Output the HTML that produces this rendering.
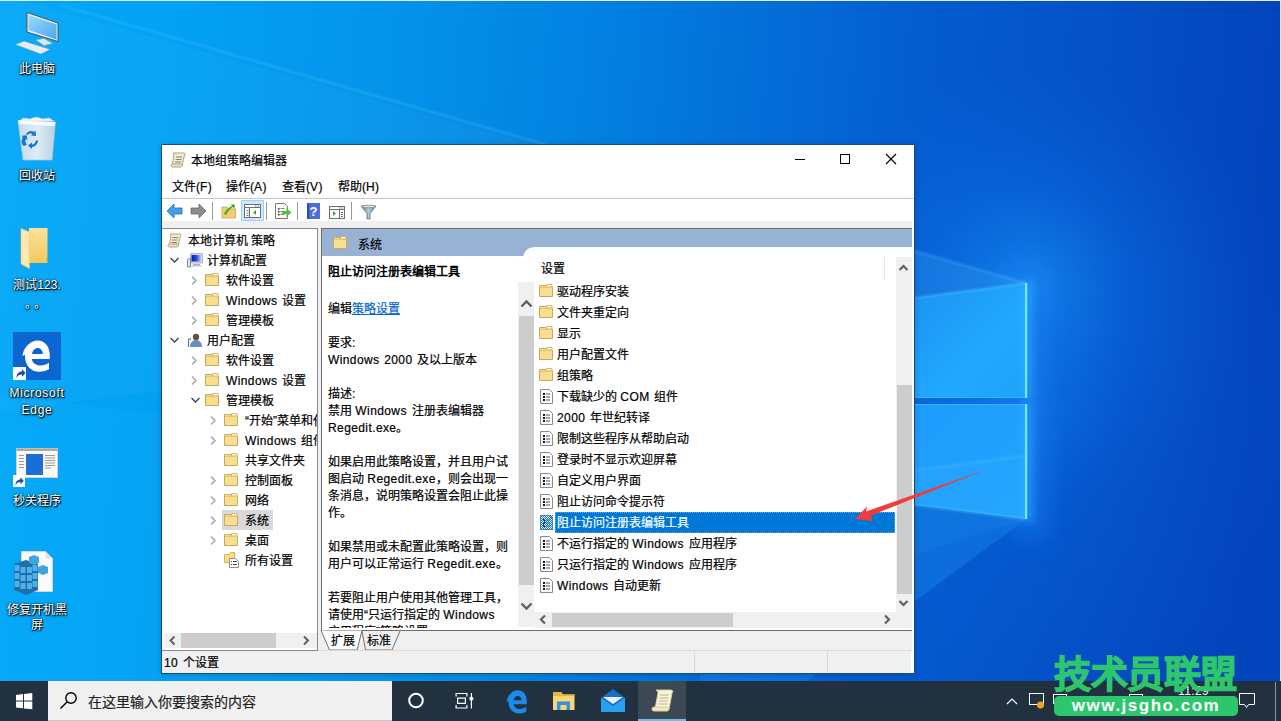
<!DOCTYPE html><html lang="zh-CN"><head><meta charset="utf-8"><style>
*{margin:0;padding:0;box-sizing:border-box}
html,body{width:1281px;height:721px;overflow:hidden}
body{position:relative;font-family:"Liberation Sans",sans-serif;font-size:12px;color:#000;background:#0a6fd8}
.a{position:absolute}
.t{position:absolute;white-space:nowrap;line-height:20px;height:20px;-webkit-text-stroke:0.2px currentColor}
b{-webkit-text-stroke:0}
.L{letter-spacing:0.4px;word-spacing:1px}
svg{position:absolute;overflow:visible}
.dt{position:absolute;color:#fff;text-align:center;width:80px;left:-3px;line-height:17px;margin-top:1px;text-shadow:0 0 2px rgba(0,0,0,.9),1px 1px 1px #000,0 1px 3px rgba(0,0,0,.6)}
</style></head><body>

<svg class="a" style="left:0;top:0" width="1281" height="721">
<defs>
<linearGradient id="bgx" x1="0" y1="0" x2="1281" y2="120" gradientUnits="userSpaceOnUse">
<stop offset="0" stop-color="#03a7f7"/><stop offset="0.13" stop-color="#02a2f5"/><stop offset="0.3" stop-color="#0394ea"/><stop offset="0.47" stop-color="#0280e0"/><stop offset="0.72" stop-color="#045ccf"/><stop offset="1" stop-color="#0444bc"/>
</linearGradient>
<radialGradient id="glow" cx="1000" cy="400" r="330" gradientUnits="userSpaceOnUse">
<stop offset="0" stop-color="#1a8cff" stop-opacity="0.5"/><stop offset="0.4" stop-color="#0a6ee8" stop-opacity="0.2"/><stop offset="1" stop-color="#0a60e0" stop-opacity="0"/>
</radialGradient>
<radialGradient id="glow2" cx="1030" cy="285" r="230" gradientUnits="userSpaceOnUse"><stop offset="0" stop-color="#20a0ff" stop-opacity="0.55"/><stop offset="0.45" stop-color="#1080f0" stop-opacity="0.22"/><stop offset="1" stop-color="#0a60e0" stop-opacity="0"/></radialGradient>
<linearGradient id="up" x1="914" y1="290" x2="1026" y2="398" gradientUnits="userSpaceOnUse">
<stop offset="0" stop-color="#1a94f2"/><stop offset="0.6" stop-color="#22a8ff"/><stop offset="1" stop-color="#1ea2fa"/>
</linearGradient>
<linearGradient id="lo" x1="914" y1="404" x2="1026" y2="519" gradientUnits="userSpaceOnUse">
<stop offset="0" stop-color="#1e9cfc"/><stop offset="1" stop-color="#22a4ff"/>
</linearGradient>
<filter id="bl" filterUnits="userSpaceOnUse" x="0" y="0" width="1281" height="721"><feGaussianBlur stdDeviation="0.8"/></filter>
<filter id="bl4" filterUnits="userSpaceOnUse" x="0" y="0" width="1281" height="721"><feGaussianBlur stdDeviation="4"/></filter>
<filter id="bl12" filterUnits="userSpaceOnUse" x="0" y="0" width="1281" height="721"><feGaussianBlur stdDeviation="14"/></filter>
</defs>
<rect width="1281" height="721" fill="url(#bgx)"/>
<rect width="1281" height="721" fill="url(#glow)"/>
<rect width="1281" height="721" fill="url(#glow2)"/>
<polygon points="1010,260 1040,270 1045,540 1010,530" fill="#1a80f8" opacity="0.6" filter="url(#bl12)"/>
<polygon points="1026,283 -40,-17 -40,416" fill="#ffffff" opacity="0.035"/>
<polygon points="1026,283 700,190 700,326" fill="#30b0ff" opacity="0.18"/>
<line x1="60" y1="5" x2="1026" y2="283" stroke="#5ac8ff" stroke-width="2" opacity="0.35" filter="url(#bl)"/>
<polygon points="700,326 1026,283 1026,398 700,398" fill="url(#up)"/>
<polygon points="700,404 1026,404 1026,519 700,478" fill="url(#lo)"/>
<polygon points="700,500 1026,452 1026,519 700,478" fill="#2aaaff" opacity="0.35"/>
<polygon points="1026,519 -40,390 -40,860" fill="#30c0ff" opacity="0.10"/>
<polygon points="1026,519 700,478 700,760" fill="#1a90f0" opacity="0.35"/>
<rect x="1024" y="281" width="8" height="118" fill="#30b8ff" opacity="0.6" filter="url(#bl4)"/>
<rect x="1024" y="403" width="8" height="118" fill="#30b8ff" opacity="0.6" filter="url(#bl4)"/>
<rect x="1025" y="283" width="2.2" height="115" fill="#78e6ff"/>
<rect x="1025" y="404" width="2.2" height="115" fill="#78e6ff"/>
<line x1="700" y1="326" x2="1026" y2="283" stroke="#60c8ff" stroke-width="1.5" opacity="0.6" filter="url(#bl)"/>
<line x1="700" y1="478" x2="1026" y2="519" stroke="#60c8ff" stroke-width="1.5" opacity="0.6" filter="url(#bl)"/>
<line x1="700" y1="404.5" x2="1026" y2="404.5" stroke="#5ccaff" stroke-width="1.2" opacity="0.55"/>
<line x1="700" y1="397.5" x2="1026" y2="397.5" stroke="#5ccaff" stroke-width="1" opacity="0.35"/>
<line x1="700" y1="500" x2="1026" y2="456" stroke="#5ccaff" stroke-width="1.2" opacity="0.45" filter="url(#bl)"/>
</svg>
<div class="a" style="left:1280px;top:0;width:1px;height:721px;background:#dfe9f3"></div>
<div class="a" style="left:0;top:0;width:1281px;height:1px;background:#e6eef5"></div>
<svg style="left:0;top:0" width="80" height="60">
<defs><linearGradient id="scr" x1="0" y1="0" x2="1" y2="1"><stop offset="0" stop-color="#9ad8fb"/><stop offset="1" stop-color="#4aa8ec"/></linearGradient></defs>
<polygon points="27,12.5 58,23 58,41.5 27,32" fill="#e9eef2" stroke="#3a4a58" stroke-width="0.9"/>
<polygon points="28.5,15 56.5,24.5 56.5,39.5 28.5,30" fill="url(#scr)"/>
<polygon points="36,40 44,38.5 52.5,43.5 44,45.5" fill="#dfe6ec" stroke="#9aa8b4" stroke-width="0.6"/>
<polygon points="16,44.5 24,41.5 49.5,49.5 41,53.8" fill="#f2f5f8" stroke="#b8c4ce" stroke-width="0.6"/>
<g stroke="#c8d2da" stroke-width="0.5"><line x1="19" y1="44" x2="44" y2="52"/><line x1="21.5" y1="43" x2="46.5" y2="51"/></g>
</svg>
<div class="dt" style="top:60px">此电脑</div>
<svg style="left:0;top:105px" width="80" height="60">
<defs><linearGradient id="rb" x1="0" y1="0" x2="1" y2="0"><stop offset="0" stop-color="#d4e0ea"/><stop offset="0.5" stop-color="#eef3f7"/><stop offset="1" stop-color="#c8d6e2"/></linearGradient></defs>
<path d="M20 16l3-3 7 1 6-2 7 2 6-1 5 3z" fill="#f6f8fa" stroke="#c8d2dc" stroke-width="0.6"/>
<polygon points="18,16 55.5,17 52,55 23,55" fill="url(#rb)" stroke="#b9c6d2" stroke-width="0.7" opacity="0.92"/>
<polygon points="18,15 55.5,17 54.5,21 19,19" fill="#ffffff" opacity="0.8"/>
<g fill="#1b74d0">
<path d="M26 29c2-3 6-4 8-2l1.5-1.5 0.5 5.5-5-0.5 1.5-1.5c-1.5-1-4-0.5-5 1z"/>
<path d="M38 35c0 4-3 7-6 7l0 2-4-3.5 4-3 0 2c2 0 3.5-1.5 3.5-3.5z"/>
<path d="M24 41c-3-2-3-6-1-9l-1.5-1 5-1 1 5-1.5-1c-1 2-1 4 1 5.5z"/>
</g>
</svg>
<div class="dt" style="top:167px">回收站</div>
<svg style="left:0;top:215px" width="80" height="60">
<defs><linearGradient id="fd" x1="0" y1="0" x2="0" y2="1"><stop offset="0" stop-color="#fbe29a"/><stop offset="1" stop-color="#f3c95c"/></linearGradient></defs>
<path d="M26 13h21.5v30l-1.5 2v2.5h1.5V48H29V13z" fill="url(#fd)"/>
<polygon points="47.5,43 47.5,48 46,48 46,45" fill="#e8b850"/>
<polygon points="21,13.5 29.5,17 29.5,53.5 21,49" fill="#fde9ad" stroke="#e6c470" stroke-width="0.6"/>
</svg>
<div class="dt" style="top:276px">测试123.</div>
<div class="dt" style="top:295px;letter-spacing:3px">。。</div>
<div class="a" style="left:13px;top:332px;width:48px;height:48px;background:#0c66d2"></div>
<svg style="left:13px;top:332px" width="48" height="48">
<path d="M24.5 8.5c-7 0-12.5 6.5-12.5 15.5 0 9.5 6 15.8 14 15.8 4 0 7.5-1 10-2.5v-6.5c-2.5 1.8-5.5 2.8-8.5 2.8-4.5 0-8-2.2-8.7-6.5H36.8v-3.5C36.8 14.5 32 8.5 24.5 8.5zM19 22c0.6-3.5 2.8-6 5.7-6s5 2.4 5.2 6z" fill="#fff" fill-rule="evenodd"/>
<path d="M9.5 24c1-8 6-13.5 12-14.5-4 1.5-6.5 4.5-7.5 8 1.5-2 4-3 6-3-3 1.5-4.5 4-5 7z" fill="#fff"/>
<rect x="0" y="35" width="13" height="13" fill="#fff"/>
<path d="M3.5 46c0-4.5 2.5-6.5 5.5-6.5v-2.5l3.5 4-3.5 4v-2.5c-2.5 0-4.5 1-5.5 3.5z" fill="#1b4fa0"/>
</svg>
<div class="dt" style="top:384px;letter-spacing:0.7px">Microsoft</div>
<div class="dt" style="top:401px;letter-spacing:0.7px">Edge</div>
<svg style="left:0;top:440px" width="80" height="60">
<rect x="16.5" y="8.5" width="41" height="29" fill="#fbfaf8" stroke="#d8d0c8"/>
<rect x="16.5" y="8.5" width="41" height="2.5" fill="#b0a8a0"/>
<rect x="26" y="14" width="17" height="21" fill="#1a6ed6"/>
<g fill="#9a9a9a"><rect x="19" y="15" width="5" height="1"/><rect x="19" y="18" width="5" height="1"/><rect x="19" y="21" width="5" height="1"/><rect x="19" y="24" width="5" height="1"/><rect x="19" y="27" width="5" height="1"/>
<rect x="45" y="15" width="10" height="1"/><rect x="45" y="17.5" width="10" height="1"/><rect x="45" y="20" width="10" height="1"/><rect x="45" y="22.5" width="10" height="1"/><rect x="45" y="25" width="10" height="1"/><rect x="45" y="27.5" width="6" height="1"/></g>
<rect x="13" y="35" width="12" height="12" fill="#fff"/>
<path d="M15.5 45.5c0-4 2.2-6 5-6v-2.3l3.2 3.6-3.2 3.6v-2.3c-2.2 0-4 1-5 3.4z" fill="#1b4fa0"/>
</svg>
<div class="dt" style="top:492px">秒关程序</div>
<svg style="left:0;top:540px" width="80" height="60">
<polygon points="21.5,11.5 45.5,11.5 52.5,18.5 52.5,51.5 21.5,51.5" fill="#fafafa" stroke="#d4d4d4"/>
<polygon points="45.5,11.5 45.5,18.5 52.5,18.5" fill="#e0e0e0"/>
<g>
<polygon points="14,24 26,20 38,24 38,50 26,55 14,50" fill="#1f6fae"/>
<g fill="#4fb0e8">
<rect x="14.5" y="25" width="5" height="6"/><rect x="20.5" y="27" width="5" height="6"/><rect x="27" y="27" width="5" height="6"/><rect x="32.5" y="25" width="5" height="6"/>
<rect x="14.5" y="33" width="5" height="6"/><rect x="20.5" y="35" width="5" height="6"/><rect x="27" y="35" width="5" height="6"/><rect x="32.5" y="33" width="5" height="6"/>
<rect x="14.5" y="41" width="5" height="6"/><rect x="20.5" y="43" width="5" height="6"/><rect x="27" y="43" width="5" height="6"/><rect x="32.5" y="41" width="5" height="6"/>
</g></g>
<polygon points="29,17 34,15 39,17 39,23 34,25 29,23" fill="#3fa4e4"/>
<polygon points="38,27 43,25 48,27 48,33 43,35 38,33" fill="#3fa4e4"/>
</svg>
<div class="dt" style="top:601px">修复开机黑</div>
<div class="dt" style="top:616px">屏</div>
<div class="a" style="left:161px;top:144px;width:754px;height:530px;background:#fff;border:1px solid #1d4a70;box-shadow:0 1px 6px rgba(0,0,0,.18)"></div>
<svg style="left:170px;top:152px" width="16" height="16">
<path d="M3 1h11c1 0 1.5 1 .5 2L12 14H2l2-11C4 2 3 1 3 1z" fill="#f3ecd2" stroke="#b0a27c" stroke-width="1"/>
<rect x="1" y="12" width="11" height="3" rx="1.5" fill="#ede3c0" stroke="#b0a27c"/>
<g stroke="#8a8068"><line x1="6" y1="5" x2="12" y2="5"/><line x1="5.5" y1="7.5" x2="11.5" y2="7.5"/><line x1="5" y1="10" x2="11" y2="10"/></g>
</svg>
<div class="t" style="left:191px;top:151px">本地组策略编辑器</div>
<svg style="left:0;top:0" width="1" height="1">
<line x1="795" y1="159.5" x2="805" y2="159.5" stroke="#000"/>
<rect x="840.5" y="154.5" width="9" height="9" fill="none" stroke="#000"/>
<path d="M886 154l10 10M896 154l-10 10" stroke="#000" stroke-width="1.1"/>
</svg>
<div class="t" style="left:172px;top:177px">文件(<span class="L">F)</span></div>
<div class="t" style="left:226px;top:177px">操作(<span class="L">A)</span></div>
<div class="t" style="left:282px;top:177px">查看(<span class="L">V)</span></div>
<div class="t" style="left:338px;top:177px">帮助(<span class="L">H)</span></div>
<div class="a" style="left:162px;top:198px;width:752px;height:1px;background:#c6c6c6"></div>
<div class="a" style="left:162px;top:221px;width:752px;height:7px;background:#f0f0f0"></div>
<div class="a" style="left:241px;top:200px;width:23px;height:21px;background:#cce8ff;border:1px solid #99d1ff"></div>
<svg style="left:0;top:0" width="1" height="1">
<g stroke="#9a9a9a"><line x1="212.5" y1="202" x2="212.5" y2="220"/><line x1="266.5" y1="202" x2="266.5" y2="220"/><line x1="297.5" y1="202" x2="297.5" y2="220"/><line x1="351.5" y1="202" x2="351.5" y2="220"/></g>
<path d="M167 211l7-7v4h8v6h-8v4z" fill="#3fa0e6" stroke="#2270b0" stroke-width="0.8"/>
<path d="M206 211l-7-7v4h-8v6h8v4z" fill="#8c8c8c" stroke="#6a6a6a" stroke-width="0.8"/>
<path d="M222 207h5l1.5 2h7v9h-13.5z" fill="#f2cf6e" stroke="#c7a246" stroke-width="0.8"/>
<path d="M224 214c2-4 4-6 8-8l-1-2 4 1-1 4-1-2c-3 2-5 4-7 8z" fill="#3aa82a"/>
<rect x="244.5" y="204.5" width="16" height="13" fill="#fff" stroke="#707070"/>
<line x1="244.5" y1="207.5" x2="260.5" y2="207.5" stroke="#707070"/>
<line x1="249.5" y1="208" x2="249.5" y2="217" stroke="#707070"/>
<path d="M256 210l-3 2.5 3 2.5z" fill="#3aa82a"/>
<g fill="#707070"><rect x="246.5" y="210" width="2" height="1"/><rect x="246.5" y="212.5" width="2" height="1"/><rect x="246.5" y="215" width="2" height="1"/><rect x="255" y="205.5" width="1.5" height="1"/><rect x="257.5" y="205.5" width="1.5" height="1"/></g>
<path d="M275.5 203.5h9l3 3v12h-12z" fill="#fdfaf0" stroke="#7a7a7a"/>
<g fill="#333"><rect x="278" y="208" width="1.5" height="1.5"/><rect x="278" y="211" width="1.5" height="1.5"/><rect x="278" y="214" width="1.5" height="1.5"/></g>
<g fill="#888"><rect x="280.5" y="208" width="4" height="1"/><rect x="280.5" y="211" width="4" height="1"/><rect x="280.5" y="214" width="4" height="1"/></g>
<path d="M282 211h4.5v-2.5l5 4-5 4v-2.5H282z" fill="#4cc33a"/>
<rect x="307" y="203" width="13" height="16" fill="#2f4dae"/>
<rect x="309" y="203" width="11" height="16" fill="#4f6fd6"/>
<text x="313.5" y="216" font-size="13" font-weight="bold" fill="#fff" text-anchor="middle" font-family="Liberation Sans">?</text>
<rect x="329.5" y="206.5" width="15" height="12" fill="#fff" stroke="#707070"/>
<line x1="329.5" y1="209.5" x2="344.5" y2="209.5" stroke="#707070"/>
<line x1="339.5" y1="210" x2="339.5" y2="218" stroke="#707070"/>
<path d="M333 211v5l3-2.5z" fill="#3aa82a"/>
<g fill="#707070"><rect x="341" y="212" width="2" height="1"/><rect x="341" y="214" width="2" height="1"/><rect x="341" y="216" width="2" height="1"/><rect x="339" y="207.5" width="1.5" height="1"/><rect x="341.5" y="207.5" width="1.5" height="1"/></g>
<defs><linearGradient id="fun" x1="0" y1="0" x2="1" y2="0"><stop offset="0" stop-color="#5f7888"/><stop offset="0.5" stop-color="#b8cad6"/><stop offset="1" stop-color="#6a8494"/></linearGradient></defs><path d="M361 206h15l-6 7.5v5.5h-3v-5.5z" fill="url(#fun)" stroke="#56707f" stroke-width="0.8"/><ellipse cx="368.5" cy="206.5" rx="7" ry="1.3" fill="#d8e4ec" stroke="#56707f" stroke-width="0.6"/>
</svg>
<div class="a" style="left:162px;top:228px;width:156px;height:423px;background:#fff;border-top:1px solid #828790;border-right:1px solid #828790"></div>
<div class="a" style="left:318px;top:228px;width:3px;height:423px;background:#f0f0f0"></div>
<div class="a" style="left:163px;top:230px;width:154px;height:403px;overflow:hidden">
<svg style="left:4px;top:3px" width="15" height="15">
<path d="M3 1h10c1 0 1.5 1 .5 2L11 13H2l2-10C4 2 3 1 3 1z" fill="#f3ecd2" stroke="#b0a27c"/>
<rect x="1" y="11" width="10" height="3" rx="1.5" fill="#ede3c0" stroke="#b0a27c"/>
<g stroke="#8a8068"><line x1="5.5" y1="4.5" x2="11" y2="4.5"/><line x1="5" y1="7" x2="10.5" y2="7"/><line x1="4.5" y1="9.5" x2="10" y2="9.5"/></g></svg>
<div class="t" style="left:25px;top:1px">本地计算机 策略</div>
<svg style="left:7px;top:27px" width="9" height="6"><path d="M0.5 1l4 4 4-4" fill="none" stroke="#404040" stroke-width="1.3"/></svg>
<svg style="left:23px;top:22px" width="17" height="16">
<defs><linearGradient id="cg" x1="0" y1="0" x2="1" y2="0"><stop offset="0" stop-color="#0a1ab0"/><stop offset="0.5" stop-color="#2a4ae0"/><stop offset="1" stop-color="#c8d8ff"/></linearGradient></defs>
<rect x="4.5" y="1.5" width="12" height="9.5" fill="#d8dce0" stroke="#b0b8c0"/>
<rect x="5.5" y="3" width="10" height="6.5" fill="url(#cg)"/>
<rect x="7" y="12" width="7" height="1.2" fill="#a8b0b8"/>
<rect x="5.5" y="13.2" width="10" height="1.3" fill="#b8c0c8"/>
<path d="M1.5 15V8.5c0-2.5 3-2.5 3-0.5V15z" fill="#dfe6ee" stroke="#6a7a90" stroke-width="0.9"/></svg>
<div class="t" style="left:44px;top:21px">计算机配置</div>
<svg style="left:28px;top:46px" width="6" height="9"><path d="M1 0.5l4 4-4 4" fill="none" stroke="#a0a0a0" stroke-width="1.3"/></svg>
<svg style="left:42px;top:43px" width="14" height="13"><path d="M0.5 1.5h6l1 1.5h6v9.5h-13z" fill="#f7dc8c" stroke="#c9a95c"/><path d="M7.5 0.5h5.5v2.5h-5.5z" fill="#fdf6e2" stroke="#c9a95c" stroke-width="0.8"/><path d="M1 3.5h12.5" stroke="#e8c46a"/><rect x="1" y="4" width="12" height="8" fill="#f8de90"/></svg>
<div class="t" style="left:63px;top:41px">软件设置</div>
<svg style="left:28px;top:66px" width="6" height="9"><path d="M1 0.5l4 4-4 4" fill="none" stroke="#a0a0a0" stroke-width="1.3"/></svg>
<svg style="left:42px;top:63px" width="14" height="13"><path d="M0.5 1.5h6l1 1.5h6v9.5h-13z" fill="#f7dc8c" stroke="#c9a95c"/><path d="M7.5 0.5h5.5v2.5h-5.5z" fill="#fdf6e2" stroke="#c9a95c" stroke-width="0.8"/><path d="M1 3.5h12.5" stroke="#e8c46a"/><rect x="1" y="4" width="12" height="8" fill="#f8de90"/></svg>
<div class="t" style="left:63px;top:61px"><span class="L">Windows </span>设置</div>
<svg style="left:28px;top:86px" width="6" height="9"><path d="M1 0.5l4 4-4 4" fill="none" stroke="#a0a0a0" stroke-width="1.3"/></svg>
<svg style="left:42px;top:83px" width="14" height="13"><path d="M0.5 1.5h6l1 1.5h6v9.5h-13z" fill="#f7dc8c" stroke="#c9a95c"/><path d="M7.5 0.5h5.5v2.5h-5.5z" fill="#fdf6e2" stroke="#c9a95c" stroke-width="0.8"/><path d="M1 3.5h12.5" stroke="#e8c46a"/><rect x="1" y="4" width="12" height="8" fill="#f8de90"/></svg>
<div class="t" style="left:63px;top:81px">管理模板</div>
<svg style="left:7px;top:107px" width="9" height="6"><path d="M0.5 1l4 4 4-4" fill="none" stroke="#404040" stroke-width="1.3"/></svg>
<svg style="left:23px;top:102px" width="17" height="16">
<circle cx="10" cy="5" r="3.2" fill="#6a5040"/>
<path d="M4 15c0-5 3-7 6-7s6 2 6 7z" fill="#6a90c0"/>
<path d="M2.5 15V8c0-2 2-2 2 0" fill="none" stroke="#5a7a9a" stroke-width="1.2"/></svg>
<div class="t" style="left:44px;top:101px">用户配置</div>
<svg style="left:28px;top:126px" width="6" height="9"><path d="M1 0.5l4 4-4 4" fill="none" stroke="#a0a0a0" stroke-width="1.3"/></svg>
<svg style="left:42px;top:123px" width="14" height="13"><path d="M0.5 1.5h6l1 1.5h6v9.5h-13z" fill="#f7dc8c" stroke="#c9a95c"/><path d="M7.5 0.5h5.5v2.5h-5.5z" fill="#fdf6e2" stroke="#c9a95c" stroke-width="0.8"/><path d="M1 3.5h12.5" stroke="#e8c46a"/><rect x="1" y="4" width="12" height="8" fill="#f8de90"/></svg>
<div class="t" style="left:63px;top:121px">软件设置</div>
<svg style="left:28px;top:146px" width="6" height="9"><path d="M1 0.5l4 4-4 4" fill="none" stroke="#a0a0a0" stroke-width="1.3"/></svg>
<svg style="left:42px;top:143px" width="14" height="13"><path d="M0.5 1.5h6l1 1.5h6v9.5h-13z" fill="#f7dc8c" stroke="#c9a95c"/><path d="M7.5 0.5h5.5v2.5h-5.5z" fill="#fdf6e2" stroke="#c9a95c" stroke-width="0.8"/><path d="M1 3.5h12.5" stroke="#e8c46a"/><rect x="1" y="4" width="12" height="8" fill="#f8de90"/></svg>
<div class="t" style="left:63px;top:141px"><span class="L">Windows </span>设置</div>
<svg style="left:28px;top:167px" width="9" height="6"><path d="M0.5 1l4 4 4-4" fill="none" stroke="#404040" stroke-width="1.3"/></svg>
<svg style="left:42px;top:163px" width="14" height="13"><path d="M0.5 1.5h6l1 1.5h6v9.5h-13z" fill="#f7dc8c" stroke="#c9a95c"/><path d="M7.5 0.5h5.5v2.5h-5.5z" fill="#fdf6e2" stroke="#c9a95c" stroke-width="0.8"/><path d="M1 3.5h12.5" stroke="#e8c46a"/><rect x="1" y="4" width="12" height="8" fill="#f8de90"/></svg>
<div class="t" style="left:63px;top:161px">管理模板</div>
<svg style="left:47px;top:186px" width="6" height="9"><path d="M1 0.5l4 4-4 4" fill="none" stroke="#a0a0a0" stroke-width="1.3"/></svg>
<svg style="left:61px;top:183px" width="14" height="13"><path d="M0.5 1.5h6l1 1.5h6v9.5h-13z" fill="#f7dc8c" stroke="#c9a95c"/><path d="M7.5 0.5h5.5v2.5h-5.5z" fill="#fdf6e2" stroke="#c9a95c" stroke-width="0.8"/><path d="M1 3.5h12.5" stroke="#e8c46a"/><rect x="1" y="4" width="12" height="8" fill="#f8de90"/></svg>
<div class="t" style="left:82px;top:181px">“开始”菜单和任务栏</div>
<svg style="left:47px;top:206px" width="6" height="9"><path d="M1 0.5l4 4-4 4" fill="none" stroke="#a0a0a0" stroke-width="1.3"/></svg>
<svg style="left:61px;top:203px" width="14" height="13"><path d="M0.5 1.5h6l1 1.5h6v9.5h-13z" fill="#f7dc8c" stroke="#c9a95c"/><path d="M7.5 0.5h5.5v2.5h-5.5z" fill="#fdf6e2" stroke="#c9a95c" stroke-width="0.8"/><path d="M1 3.5h12.5" stroke="#e8c46a"/><rect x="1" y="4" width="12" height="8" fill="#f8de90"/></svg>
<div class="t" style="left:82px;top:201px"><span class="L">Windows </span>组件</div>
<svg style="left:61px;top:223px" width="14" height="13"><path d="M0.5 1.5h6l1 1.5h6v9.5h-13z" fill="#f7dc8c" stroke="#c9a95c"/><path d="M7.5 0.5h5.5v2.5h-5.5z" fill="#fdf6e2" stroke="#c9a95c" stroke-width="0.8"/><path d="M1 3.5h12.5" stroke="#e8c46a"/><rect x="1" y="4" width="12" height="8" fill="#f8de90"/></svg>
<div class="t" style="left:82px;top:221px">共享文件夹</div>
<svg style="left:47px;top:246px" width="6" height="9"><path d="M1 0.5l4 4-4 4" fill="none" stroke="#a0a0a0" stroke-width="1.3"/></svg>
<svg style="left:61px;top:243px" width="14" height="13"><path d="M0.5 1.5h6l1 1.5h6v9.5h-13z" fill="#f7dc8c" stroke="#c9a95c"/><path d="M7.5 0.5h5.5v2.5h-5.5z" fill="#fdf6e2" stroke="#c9a95c" stroke-width="0.8"/><path d="M1 3.5h12.5" stroke="#e8c46a"/><rect x="1" y="4" width="12" height="8" fill="#f8de90"/></svg>
<div class="t" style="left:82px;top:241px">控制面板</div>
<svg style="left:47px;top:266px" width="6" height="9"><path d="M1 0.5l4 4-4 4" fill="none" stroke="#a0a0a0" stroke-width="1.3"/></svg>
<svg style="left:61px;top:263px" width="14" height="13"><path d="M0.5 1.5h6l1 1.5h6v9.5h-13z" fill="#f7dc8c" stroke="#c9a95c"/><path d="M7.5 0.5h5.5v2.5h-5.5z" fill="#fdf6e2" stroke="#c9a95c" stroke-width="0.8"/><path d="M1 3.5h12.5" stroke="#e8c46a"/><rect x="1" y="4" width="12" height="8" fill="#f8de90"/></svg>
<div class="t" style="left:82px;top:261px">网络</div>
<svg style="left:47px;top:286px" width="6" height="9"><path d="M1 0.5l4 4-4 4" fill="none" stroke="#a0a0a0" stroke-width="1.3"/></svg>
<div class="a" style="left:59px;top:280px;width:51px;height:20px;background:#d9d9d9"></div>
<svg style="left:61px;top:283px" width="14" height="13"><path d="M0.5 1.5h6l1 1.5h6v9.5h-13z" fill="#f7dc8c" stroke="#c9a95c"/><path d="M7.5 0.5h5.5v2.5h-5.5z" fill="#fdf6e2" stroke="#c9a95c" stroke-width="0.8"/><path d="M1 3.5h12.5" stroke="#e8c46a"/><rect x="1" y="4" width="12" height="8" fill="#f8de90"/></svg>
<div class="t" style="left:82px;top:281px">系统</div>
<svg style="left:47px;top:306px" width="6" height="9"><path d="M1 0.5l4 4-4 4" fill="none" stroke="#a0a0a0" stroke-width="1.3"/></svg>
<svg style="left:61px;top:303px" width="14" height="13"><path d="M0.5 1.5h6l1 1.5h6v9.5h-13z" fill="#f7dc8c" stroke="#c9a95c"/><path d="M7.5 0.5h5.5v2.5h-5.5z" fill="#fdf6e2" stroke="#c9a95c" stroke-width="0.8"/><path d="M1 3.5h12.5" stroke="#e8c46a"/><rect x="1" y="4" width="12" height="8" fill="#f8de90"/></svg>
<div class="t" style="left:82px;top:301px">桌面</div>
<svg style="left:61px;top:322px" width="16" height="16">
<path d="M0.5 2.5h5l1-2h4v10h-10z" fill="#f8dc82" stroke="#d8b45a"/>
<path d="M5.5 6.5h6l3 3v6h-9z" fill="#fff" stroke="#909090"/>
<g fill="#444"><rect x="7" y="9" width="1" height="1"/><rect x="7" y="12" width="1" height="1"/><rect x="9" y="9" width="4" height="1"/><rect x="9" y="12" width="4" height="1"/></g></svg>
<div class="t" style="left:82px;top:321px">所有设置</div>
</div>
<div class="a" style="left:164px;top:633px;width:153px;height:15px;background:#f0f0f0"></div>
<div class="a" style="left:181px;top:633px;width:95px;height:15px;background:#cdcdcd"></div>
<svg style="left:0;top:0" width="1" height="1"><path d="M174.5 636.5l-4 4 4 4" fill="none" stroke="#606060" stroke-width="2"/><path d="M304 636.5l4 4-4 4" fill="none" stroke="#606060" stroke-width="2"/></svg>
<div class="a" style="left:321px;top:228px;width:592px;height:402px;background:#fff;border-top:1px solid #6d6d6d;border-left:1px solid #6d6d6d"></div><div class="a" style="left:912px;top:221px;width:2px;height:430px;background:#fff"></div>
<div class="a" style="left:322px;top:229px;width:590px;height:27px;background:#98b2d4"></div>
<svg style="left:333px;top:236px" width="14" height="13"><path d="M0.5 1.5h6l1 1.5h6v9.5h-13z" fill="#f7dc8c" stroke="#c9a95c"/><path d="M7.5 0.5h5.5v2.5h-5.5z" fill="#fdf6e2" stroke="#c9a95c" stroke-width="0.8"/><path d="M1 3.5h12.5" stroke="#e8c46a"/><rect x="1" y="4" width="12" height="8" fill="#f8de90"/></svg>
<div class="t" style="left:358px;top:235px">系统</div>
<svg style="left:0;top:0" width="1" height="1"><path d="M523 257C525 250 528 247 536 247H912V613H523z" fill="#fff"/></svg>
<div class="a" style="left:322px;top:256px;width:196px;height:372px;overflow:hidden">
<div class="t" style="left:6px;top:6px"><b>阻止访问注册表编辑工具</b></div>
<div class="t" style="left:6px;top:43px">编辑<span style="color:#0066cc;text-decoration:underline">策略设置</span></div>
<div class="t" style="left:6px;top:77px">要求:</div>
<div class="t" style="left:6px;top:94px"><span class="L">Windows 2000 </span>及以上版本</div>
<div class="t" style="left:6px;top:128px">描述:</div>
<div class="t" style="left:6px;top:145px">禁用 <span class="L">Windows </span>注册表编辑器</div>
<div class="t" style="left:6px;top:162px"><span class="L">Regedit.exe</span>。</div>
<div class="t" style="left:6px;top:196px">如果启用此策略设置，并且用户试</div>
<div class="t" style="left:6px;top:213px">图启动 <span class="L">Regedit.exe</span>，则会出现一</div>
<div class="t" style="left:6px;top:230px">条消息，说明策略设置会阻止此操</div>
<div class="t" style="left:6px;top:247px">作。</div>
<div class="t" style="left:6px;top:281px">如果禁用或未配置此策略设置，则</div>
<div class="t" style="left:6px;top:298px">用户可以正常运行 <span class="L">Regedit.exe</span>。</div>
<div class="t" style="left:6px;top:332px">若要阻止用户使用其他管理工具，</div>
<div class="t" style="left:6px;top:349px">请使用“只运行指定的 <span class="L">Windows</span></div>
<div class="t" style="left:6px;top:366px">应用程序”策略设置。</div>
</div>
<div class="a" style="left:518px;top:282px;width:16px;height:345px;background:#f0f0f0"></div>
<div class="a" style="left:519px;top:316px;width:15px;height:269px;background:#cdcdcd"></div>
<svg style="left:0;top:0" width="1" height="1"><path d="M521.5 306.5l5-5 5 5" fill="none" stroke="#606060" stroke-width="2.4"/><path d="M521.5 603.5l5 5 5-5" fill="none" stroke="#606060" stroke-width="2.4"/></svg>
<div class="t" style="left:541px;top:259px">设置</div>
<div class="a" style="left:884px;top:257px;width:1px;height:24px;background:#e5e5e5"></div>
<svg style="left:539px;top:284px" width="14" height="13"><path d="M0.5 1.5h6l1 1.5h6v9.5h-13z" fill="#f7dc8c" stroke="#c9a95c"/><path d="M7.5 0.5h5.5v2.5h-5.5z" fill="#fdf6e2" stroke="#c9a95c" stroke-width="0.8"/><path d="M1 3.5h12.5" stroke="#e8c46a"/><rect x="1" y="4" width="12" height="8" fill="#f8de90"/></svg>
<div class="t" style="left:557px;top:282px">驱动程序安装</div>
<svg style="left:539px;top:305px" width="14" height="13"><path d="M0.5 1.5h6l1 1.5h6v9.5h-13z" fill="#f7dc8c" stroke="#c9a95c"/><path d="M7.5 0.5h5.5v2.5h-5.5z" fill="#fdf6e2" stroke="#c9a95c" stroke-width="0.8"/><path d="M1 3.5h12.5" stroke="#e8c46a"/><rect x="1" y="4" width="12" height="8" fill="#f8de90"/></svg>
<div class="t" style="left:557px;top:303px">文件夹重定向</div>
<svg style="left:539px;top:326px" width="14" height="13"><path d="M0.5 1.5h6l1 1.5h6v9.5h-13z" fill="#f7dc8c" stroke="#c9a95c"/><path d="M7.5 0.5h5.5v2.5h-5.5z" fill="#fdf6e2" stroke="#c9a95c" stroke-width="0.8"/><path d="M1 3.5h12.5" stroke="#e8c46a"/><rect x="1" y="4" width="12" height="8" fill="#f8de90"/></svg>
<div class="t" style="left:557px;top:324px">显示</div>
<svg style="left:539px;top:347px" width="14" height="13"><path d="M0.5 1.5h6l1 1.5h6v9.5h-13z" fill="#f7dc8c" stroke="#c9a95c"/><path d="M7.5 0.5h5.5v2.5h-5.5z" fill="#fdf6e2" stroke="#c9a95c" stroke-width="0.8"/><path d="M1 3.5h12.5" stroke="#e8c46a"/><rect x="1" y="4" width="12" height="8" fill="#f8de90"/></svg>
<div class="t" style="left:557px;top:345px">用户配置文件</div>
<svg style="left:539px;top:368px" width="14" height="13"><path d="M0.5 1.5h6l1 1.5h6v9.5h-13z" fill="#f7dc8c" stroke="#c9a95c"/><path d="M7.5 0.5h5.5v2.5h-5.5z" fill="#fdf6e2" stroke="#c9a95c" stroke-width="0.8"/><path d="M1 3.5h12.5" stroke="#e8c46a"/><rect x="1" y="4" width="12" height="8" fill="#f8de90"/></svg>
<div class="t" style="left:557px;top:366px">组策略</div>
<svg style="left:540px;top:389px" width="13" height="15"><path d="M0.5 0.5h9l3 3v11h-12z" fill="#fff" stroke="#8a8a8a"/><g fill="#111"><rect x="3" y="4" width="2" height="2"/><rect x="3" y="7" width="2" height="2"/><rect x="3" y="10" width="2" height="2"/></g><g fill="#505050"><rect x="6" y="4.5" width="4" height="1"/><rect x="6" y="7.5" width="4" height="1"/><rect x="6" y="10.5" width="4" height="1"/></g></svg>
<div class="t" style="left:557px;top:387px">下载缺少的 <span class="L">COM </span>组件</div>
<svg style="left:540px;top:410px" width="13" height="15"><path d="M0.5 0.5h9l3 3v11h-12z" fill="#fff" stroke="#8a8a8a"/><g fill="#111"><rect x="3" y="4" width="2" height="2"/><rect x="3" y="7" width="2" height="2"/><rect x="3" y="10" width="2" height="2"/></g><g fill="#505050"><rect x="6" y="4.5" width="4" height="1"/><rect x="6" y="7.5" width="4" height="1"/><rect x="6" y="10.5" width="4" height="1"/></g></svg>
<div class="t" style="left:557px;top:408px"><span class="L">2000 </span>年世纪转译</div>
<svg style="left:540px;top:431px" width="13" height="15"><path d="M0.5 0.5h9l3 3v11h-12z" fill="#fff" stroke="#8a8a8a"/><g fill="#111"><rect x="3" y="4" width="2" height="2"/><rect x="3" y="7" width="2" height="2"/><rect x="3" y="10" width="2" height="2"/></g><g fill="#505050"><rect x="6" y="4.5" width="4" height="1"/><rect x="6" y="7.5" width="4" height="1"/><rect x="6" y="10.5" width="4" height="1"/></g></svg>
<div class="t" style="left:557px;top:429px">限制这些程序从帮助启动</div>
<svg style="left:540px;top:452px" width="13" height="15"><path d="M0.5 0.5h9l3 3v11h-12z" fill="#fff" stroke="#8a8a8a"/><g fill="#111"><rect x="3" y="4" width="2" height="2"/><rect x="3" y="7" width="2" height="2"/><rect x="3" y="10" width="2" height="2"/></g><g fill="#505050"><rect x="6" y="4.5" width="4" height="1"/><rect x="6" y="7.5" width="4" height="1"/><rect x="6" y="10.5" width="4" height="1"/></g></svg>
<div class="t" style="left:557px;top:450px">登录时不显示欢迎屏幕</div>
<svg style="left:540px;top:473px" width="13" height="15"><path d="M0.5 0.5h9l3 3v11h-12z" fill="#fff" stroke="#8a8a8a"/><g fill="#111"><rect x="3" y="4" width="2" height="2"/><rect x="3" y="7" width="2" height="2"/><rect x="3" y="10" width="2" height="2"/></g><g fill="#505050"><rect x="6" y="4.5" width="4" height="1"/><rect x="6" y="7.5" width="4" height="1"/><rect x="6" y="10.5" width="4" height="1"/></g></svg>
<div class="t" style="left:557px;top:471px">自定义用户界面</div>
<svg style="left:540px;top:494px" width="13" height="15"><path d="M0.5 0.5h9l3 3v11h-12z" fill="#fff" stroke="#8a8a8a"/><g fill="#111"><rect x="3" y="4" width="2" height="2"/><rect x="3" y="7" width="2" height="2"/><rect x="3" y="10" width="2" height="2"/></g><g fill="#505050"><rect x="6" y="4.5" width="4" height="1"/><rect x="6" y="7.5" width="4" height="1"/><rect x="6" y="10.5" width="4" height="1"/></g></svg>
<div class="t" style="left:557px;top:492px">阻止访问命令提示符</div>
<div class="a" style="left:555px;top:512px;width:340px;height:21px;background:#0078d7;outline:1px dotted #6aa8e8;outline-offset:-1px"></div>
<svg style="left:540px;top:515px" width="13" height="15"><path d="M0.5 0.5h9l3 3v11h-12z" fill="#fff" stroke="#8a8a8a"/><g fill="#111"><rect x="3" y="4" width="2" height="2"/><rect x="3" y="7" width="2" height="2"/><rect x="3" y="10" width="2" height="2"/></g><g fill="#505050"><rect x="6" y="4.5" width="4" height="1"/><rect x="6" y="7.5" width="4" height="1"/><rect x="6" y="10.5" width="4" height="1"/></g><defs><pattern id="chk" width="2" height="2" patternUnits="userSpaceOnUse"><rect width="1" height="1" fill="#0078d7"/><rect x="1" y="1" width="1" height="1" fill="#0078d7"/></pattern></defs><rect x="0" y="0" width="13" height="15" fill="url(#chk)"/></svg>
<div class="t" style="left:557px;top:513px;color:#fff">阻止访问注册表编辑工具</div>
<svg style="left:540px;top:536px" width="13" height="15"><path d="M0.5 0.5h9l3 3v11h-12z" fill="#fff" stroke="#8a8a8a"/><g fill="#111"><rect x="3" y="4" width="2" height="2"/><rect x="3" y="7" width="2" height="2"/><rect x="3" y="10" width="2" height="2"/></g><g fill="#505050"><rect x="6" y="4.5" width="4" height="1"/><rect x="6" y="7.5" width="4" height="1"/><rect x="6" y="10.5" width="4" height="1"/></g></svg>
<div class="t" style="left:557px;top:534px">不运行指定的 <span class="L">Windows </span>应用程序</div>
<svg style="left:540px;top:557px" width="13" height="15"><path d="M0.5 0.5h9l3 3v11h-12z" fill="#fff" stroke="#8a8a8a"/><g fill="#111"><rect x="3" y="4" width="2" height="2"/><rect x="3" y="7" width="2" height="2"/><rect x="3" y="10" width="2" height="2"/></g><g fill="#505050"><rect x="6" y="4.5" width="4" height="1"/><rect x="6" y="7.5" width="4" height="1"/><rect x="6" y="10.5" width="4" height="1"/></g></svg>
<div class="t" style="left:557px;top:555px">只运行指定的 <span class="L">Windows </span>应用程序</div>
<svg style="left:540px;top:578px" width="13" height="15"><path d="M0.5 0.5h9l3 3v11h-12z" fill="#fff" stroke="#8a8a8a"/><g fill="#111"><rect x="3" y="4" width="2" height="2"/><rect x="3" y="7" width="2" height="2"/><rect x="3" y="10" width="2" height="2"/></g><g fill="#505050"><rect x="6" y="4.5" width="4" height="1"/><rect x="6" y="7.5" width="4" height="1"/><rect x="6" y="10.5" width="4" height="1"/></g></svg>
<div class="t" style="left:557px;top:576px"><span class="L">Windows </span>自动更新</div>
<div class="a" style="left:896px;top:257px;width:16px;height:356px;background:#f0f0f0"></div>
<div class="a" style="left:897px;top:385px;width:15px;height:209px;background:#cdcdcd"></div>
<div class="a" style="left:534px;top:612px;width:378px;height:16px;background:#f0f0f0"></div>
<div class="a" style="left:552px;top:613px;width:181px;height:14px;background:#cdcdcd"></div>
<svg style="left:0;top:0" width="1" height="1">
<path d="M899.5 270l4-4 4 4" fill="none" stroke="#606060" stroke-width="2.2"/>
<path d="M899.5 601l4 4 4-4" fill="none" stroke="#606060" stroke-width="2.2"/>
<path d="M545 615.5l-4 4 4 4" fill="none" stroke="#606060" stroke-width="2.2"/>
<path d="M885 615.5l4 4-4 4" fill="none" stroke="#606060" stroke-width="2.2"/>
</svg>
<div class="a" style="left:321px;top:630px;width:591px;height:21px;background:#f0f0f0;border-top:1px solid #6d6d6d"></div>
<svg style="left:0;top:0" width="1" height="1">
<path d="M362 631L365.5 650H392L400 631" fill="#f0f0f0" stroke="#707070"/>
<path d="M321 630.5L329.5 650H357L362 630.5" fill="#fff" stroke="#707070"/>
</svg>
<div class="t" style="left:331px;top:631px">扩展</div>
<div class="t" style="left:367px;top:631px">标准</div>
<div class="a" style="left:162px;top:650px;width:750px;height:1px;background:#dadada"></div>
<div class="a" style="left:162px;top:650px;width:156px;height:1px;background:#828790"></div>
<div class="a" style="left:162px;top:651px;width:749px;height:22px;background:#f0f0f0"></div>
<div class="a" style="left:694px;top:652px;width:1px;height:20px;background:#d7d7d7"></div>
<div class="a" style="left:827px;top:652px;width:1px;height:20px;background:#d7d7d7"></div>
<div class="t" style="left:164px;top:653px"><span class="L">10 </span>个设置</div>
<svg style="left:0;top:0" width="1" height="1">
<path d="M855 519L867 506.5L866 511.5L986 469.5L871 515.5L872.5 521z" fill="#f03c3c"/>
</svg>
<div class="a" style="left:0;top:681px;width:1281px;height:40px;background:#213140"></div>
<svg style="left:0;top:0" width="1" height="1"><path d="M16 694.9L23 694V700.6H16zM24 693.9L32.3 692.9V700.6H24zM16 701.6H23V708.3L16 707.4zM24 701.6H32.3V709.2L24 708.4z" fill="#fff"/></svg>
<div class="a" style="left:48px;top:681px;width:344px;height:40px;background:#f0f0f0;border-bottom:1px solid #c8c8c8"></div>
<svg style="left:0;top:0" width="1" height="1"><circle cx="71" cy="698" r="5.2" fill="none" stroke="#000" stroke-width="1.4"/><line x1="67" y1="702" x2="60.5" y2="708.5" stroke="#000" stroke-width="1.5"/></svg>
<div class="t" style="left:88px;top:692px;color:#222;font-size:14px">在这里输入你要搜索的内容</div>
<svg style="left:0;top:0" width="1" height="1">
<circle cx="416" cy="700.5" r="6.8" fill="none" stroke="#fff" stroke-width="2"/>
<g fill="none" stroke="#fff" stroke-width="1.2"><path d="M456.1 696.5v-3h10.8v3M456.1 705v3h10.8v-3M457.6 698.1h7.8v5.3h-7.8z"/><line x1="471.4" y1="693" x2="471.4" y2="708.5"/></g>
<rect x="469.6" y="697" width="3.6" height="3.2" fill="#fff"/>
<g transform="translate(505.5 690) scale(0.74)" fill="#1d8ae8">
<path d="M24.5 0.5c-7 0-12.5 6.5-12.5 15.5 0 9.5 6 15.8 14 15.8 4 0 7.5-1 10-2.5v-6.5c-2.5 1.8-5.5 2.8-8.5 2.8-4.5 0-8-2.2-8.7-6.5H36.8v-3.5C36.8 6.5 32 0.5 24.5 0.5zM19 14c0.6-3.5 2.8-6 5.7-6s5 2.4 5.2 6z" fill-rule="evenodd" transform="translate(-8 0)"/>
<path d="M1.5 16c1-8 6-13.5 12-14.5-4 1.5-6.5 4.5-7.5 8 1.5-2 4-3 6-3-3 1.5-4.5 4-5 7z"/>
</g>
<path d="M553 692h8l2 2.5h11.5V710H553z" fill="#f9d874"/>
<path d="M553 692h8l2 2.5h11.5V696H553z" fill="#e9b43c"/>
<path d="M557 710v-8.5h13V710h-3.5v-5h-6V710z" fill="#3a8ee6"/>
<path d="M601 698l12-9 12 9v14h-24z" fill="#1a6fc8"/>
<path d="M601 698l12 8 12-8v14h-24z" fill="#2aa0f0"/>
<path d="M603 697h20l-10 7z" fill="#e8f0f8"/>
</svg>
<div class="a" style="left:638px;top:681px;width:48px;height:40px;background:#3c4954"></div>
<div class="a" style="left:638px;top:719px;width:48px;height:2px;background:#76b9ed"></div>
<svg style="left:651px;top:689px" width="23" height="23">
<path d="M5 1h15c2 0 2.5 2 1 3L18 20H4l3-16C7 2 5 1 5 1z" fill="#fbf5d8" stroke="#d8cc98"/>
<rect x="1" y="18" width="17" height="4" rx="2" fill="#f3e9c0" stroke="#d8cc98"/>
<g stroke="#bcb08a"><line x1="9" y1="6" x2="18" y2="6"/><line x1="8.5" y1="9" x2="17.5" y2="9"/><line x1="8" y1="12" x2="17" y2="12"/><line x1="7.5" y1="15" x2="16.5" y2="15"/></g></svg>
<svg style="left:0;top:0" width="1" height="1">
<path d="M1007 704l5-5 5 5" fill="none" stroke="#fff" stroke-width="1.2"/>
<rect x="1029.5" y="693.5" width="14" height="11" fill="none" stroke="#fff"/>
<circle cx="1040.5" cy="705" r="3.5" fill="#f5a020"/>
<rect x="1053.5" y="694.5" width="13" height="9" fill="none" stroke="#fff"/>
<rect x="1129.5" y="694.5" width="13" height="10" fill="none" stroke="#fff"/>
<path d="M1239.5 693.5h15v11h-6l-2 3-2-3h-5z" fill="none" stroke="#fff"/>
<line x1="1275.5" y1="682" x2="1275.5" y2="721" stroke="#8a949c"/>
</svg>
<div class="t" style="left:1178px;top:681px;color:#fff;-webkit-text-stroke:0"><span class="L">11:29</span></div>
<div class="a" style="left:1054px;top:651px;width:200px;height:50px;color:#2ec66d;font-size:37px;font-weight:700;-webkit-text-stroke:1.2px #2ec66d;line-height:50px;letter-spacing:-0.4px;white-space:nowrap">技术员联盟</div>
<div class="a" style="left:1054px;top:696px;width:184px;height:20px;background:#2ec66d;border-radius:5px"></div>
<div class="a" style="left:1054px;top:696px;width:184px;height:20px;color:#fff;font-size:17px;font-weight:bold;line-height:20px;text-align:center;letter-spacing:1.5px">www.jsgho.com</div>
</body></html>
